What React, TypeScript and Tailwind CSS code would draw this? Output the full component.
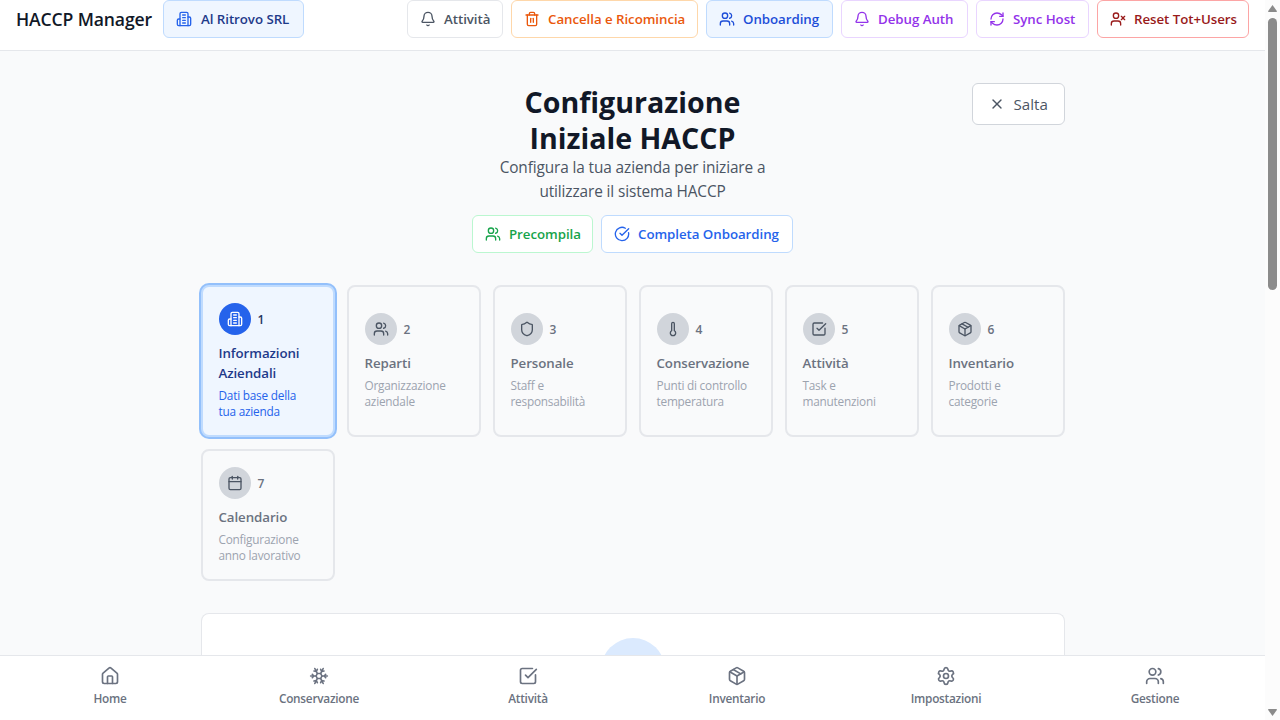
import type { ComponentType, ReactNode } from "react";
import {
  Bell, Trash2, Users, RefreshCw, UserX, X, CircleCheckBig, Shield, Thermometer,
  SquareCheckBig, Package, Calendar, House, Snowflake, Settings,
} from "lucide-react";

type Icon = ComponentType<{ className?: string }>;

function Building({ className }: { className?: string }) {
  return (
    <svg className={className} viewBox="0 0 24 24" fill="none" stroke="currentColor" strokeWidth="2" strokeLinecap="round" strokeLinejoin="round">
      <path d="M6 22V4a2 2 0 0 1 2-2h8a2 2 0 0 1 2 2v18Z" />
      <path d="M6 12H4a2 2 0 0 0-2 2v6a2 2 0 0 0 2 2h2" />
      <path d="M18 9h2a2 2 0 0 1 2 2v9a2 2 0 0 1-2 2h-2" />
      <path d="M10 6h4M10 10h4M10 14h4M10 18h4" />
    </svg>
  );
}

function Button({ icon: I, className, children }: { icon: Icon; className: string; children: ReactNode }) {
  return (
    <button className={`flex h-[38px] shrink-0 items-center gap-2 rounded-md border px-3 text-[13.3px] leading-5 font-semibold tracking-[-0.05px] whitespace-nowrap ${className}`}>
      <I className="size-4 shrink-0" />
      <span>{children}</span>
    </button>
  );
}

const steps: { icon: Icon; title: string[]; text: string[] }[] = [
  { icon: Building, title: ["Informazioni", "Aziendali"], text: ["Dati base della", "tua azienda"] },
  { icon: Users, title: ["Reparti"], text: ["Organizzazione", "aziendale"] },
  { icon: Shield, title: ["Personale"], text: ["Staff e", "responsabilità"] },
  { icon: Thermometer, title: ["Conservazione"], text: ["Punti di controllo", "temperatura"] },
  { icon: SquareCheckBig, title: ["Attività"], text: ["Task e", "manutenzioni"] },
  { icon: Package, title: ["Inventario"], text: ["Prodotti e", "categorie"] },
  { icon: Calendar, title: ["Calendario"], text: ["Configurazione", "anno lavorativo"] },
];

const tabs: { icon: Icon; label: string }[] = [
  { icon: House, label: "Home" },
  { icon: Snowflake, label: "Conservazione" },
  { icon: SquareCheckBig, label: "Attività" },
  { icon: Package, label: "Inventario" },
  { icon: Settings, label: "Impostazioni" },
  { icon: Users, label: "Gestione" },
];

export default function App() {
  return (
    <div className="flex h-[720px] w-[1280px] overflow-hidden bg-[#f9fafb] font-['Open_Sans','Noto_Sans',sans-serif]">
      <div className="flex w-[1265px] flex-col">
        <header className="flex h-[51px] shrink-0 items-start justify-between border-b border-[#e5e7eb] bg-white px-4">
          <div className="flex items-start">
            <h1 className="w-[147px] pt-[5px] text-[17.6px] leading-7 font-semibold tracking-[-0.14px] whitespace-nowrap text-[#111827]">HACCP Manager</h1>
            <Button icon={Building} className="w-[141px] border-[#bfdbfe] bg-[#eff6ff] text-[#1e3a8a] [&>span]:pl-px [&>svg]:text-[#2563eb]">Al Ritrovo SRL</Button>
          </div>
          <div className="flex gap-2">
            <Button icon={Bell} className="w-24 border-[#e5e7eb] text-[#4b5563]">Attività</Button>
            <Button icon={Trash2} className="w-[187px] border-[#fed7aa] text-[#ea580c]">Cancella e Ricomincia</Button>
            <Button icon={Users} className="w-[127px] border-[#bfdbfe] bg-[#eff6ff] text-[#1d4ed8]">Onboarding</Button>
            <Button icon={Bell} className="w-[127px] border-[#e9d5ff] text-[#9333ea]">Debug Auth</Button>
            <Button icon={RefreshCw} className="w-[113px] border-[#e9d5ff] text-[#9333ea]">Sync Host</Button>
            <Button icon={UserX} className="w-[152px] border-[#fca5a5] text-[#991b1b]">Reset Tot+Users</Button>
          </div>
        </header>

        <main className="mx-auto flex min-h-0 w-[864px] flex-1 flex-col pt-8">
          <div className="grid shrink-0 grid-cols-[1fr_321px_1fr] items-start">
            <div />
            <div className="text-center">
              <h2 className="-mb-px pt-px text-[28.6px] leading-9 font-bold whitespace-nowrap text-[#111827]">
                <span className="block">Configurazione</span>
                <span className="block">Iniziale HACCP</span>
              </h2>
              <p className="-mb-px pt-px text-[15.4px] leading-6 tracking-[-0.12px] whitespace-nowrap text-[#4b5563]">
                <span className="block">Configura la tua azienda per iniziare a</span>
                <span className="block">utilizzare il sistema HACCP</span>
              </p>
              <div className="mt-3 flex gap-2">
                <Button icon={Users} className="w-[121px] border-[#bbf7d0] bg-white text-[#16a34a]">Precompila</Button>
                <Button icon={CircleCheckBig} className="w-48 border-[#bfdbfe] bg-white text-[#2563eb]">Completa Onboarding</Button>
              </div>
            </div>
            <button className="flex h-[42px] w-[93px] items-center gap-2 justify-self-end rounded-md border border-[#d1d5db] bg-white px-4 text-[15.15px] leading-6 text-[#4b5563]">
              <X className="size-4 shrink-0" />
              <span className="pl-px">Salta</span>
            </button>
          </div>

          <div className="mt-8 grid shrink-0 grid-cols-6 gap-3">
            {steps.map((step, i) => {
              const active = i === 0;
              return (
                <button
                  key={step.title[0]}
                  className={`flex flex-col justify-center rounded-lg border-2 p-4 text-left whitespace-nowrap ${active ? "border-[#bfdbfe] bg-[#eff6ff] ring-2 ring-[#93c0fb]" : "border-[#e5e7eb] bg-[#f9fafb]"}`}
                >
                  <div className="mb-2 flex items-center gap-2">
                    <span className={`flex size-8 items-center justify-center rounded-full ${active ? "bg-[#2563eb] text-white" : "bg-[#d1d5db] text-[#4b5563]"}`}>
                      <step.icon className="size-4" />
                    </span>
                    <span className={`-ml-px pt-0.5 text-xs font-semibold ${active ? "text-[#1f3560]" : "text-[#6b7280]"}`}>{i + 1}</span>
                  </div>
                  <h3 className={`text-[13.3px] leading-5 font-semibold tracking-[-0.08px] ${active ? "text-[#1e3a8a]" : "text-[#6b7280]"}`}>
                    {step.title.map((line) => <span key={line} className="block">{line}</span>)}
                  </h3>
                  <p className={`mt-1 text-[11.8px] leading-4 tracking-[-0.22px] ${active ? "text-[#2563eb]" : "text-[#9ca3af]"}`}>
                    {step.text.map((line) => <span key={line} className="block">{line}</span>)}
                  </p>
                </button>
              );
            })}
          </div>

          <section className="mt-8 flex min-h-0 flex-1 justify-center overflow-hidden rounded-t-lg border border-b-0 border-[#e5e7eb] bg-white pt-6">
            <div className="size-16 shrink-0 rounded-full bg-[#dbeafe]" />
          </section>
        </main>

        <nav className="grid h-[65px] shrink-0 grid-cols-6 border-t border-[#e5e7eb] bg-white px-[5.5px] text-[#6b7280]">
          {tabs.map((tab) => (
            <a key={tab.label} className="flex flex-col items-center pt-2.5">
              <tab.icon className="size-5" />
              <span className="mt-1 text-[11.8px] leading-4 font-semibold tracking-[-0.25px]">{tab.label}</span>
            </a>
          ))}
        </nav>
      </div>

      <div className="flex w-[15px] flex-col items-center bg-[#fcfcfc]">
        <svg className="mt-[5px] h-[7px] w-[9px]" viewBox="0 0 9 7" fill="#8b8b8b"><path d="M4.5 0 9 6.2 8.5 7h-8L0 6.2Z" /></svg>
        <div className="mt-1.5 h-[272px] w-[9px] rounded-full bg-[#8b8b8b]" />
        <div className="flex-1" />
        <svg className="mb-1 h-[7px] w-[9px]" viewBox="0 0 9 7" fill="#8b8b8b"><path d="M4.5 7 0 .8.5 0h8l.5.8Z" /></svg>
      </div>
    </div>
  );
}
